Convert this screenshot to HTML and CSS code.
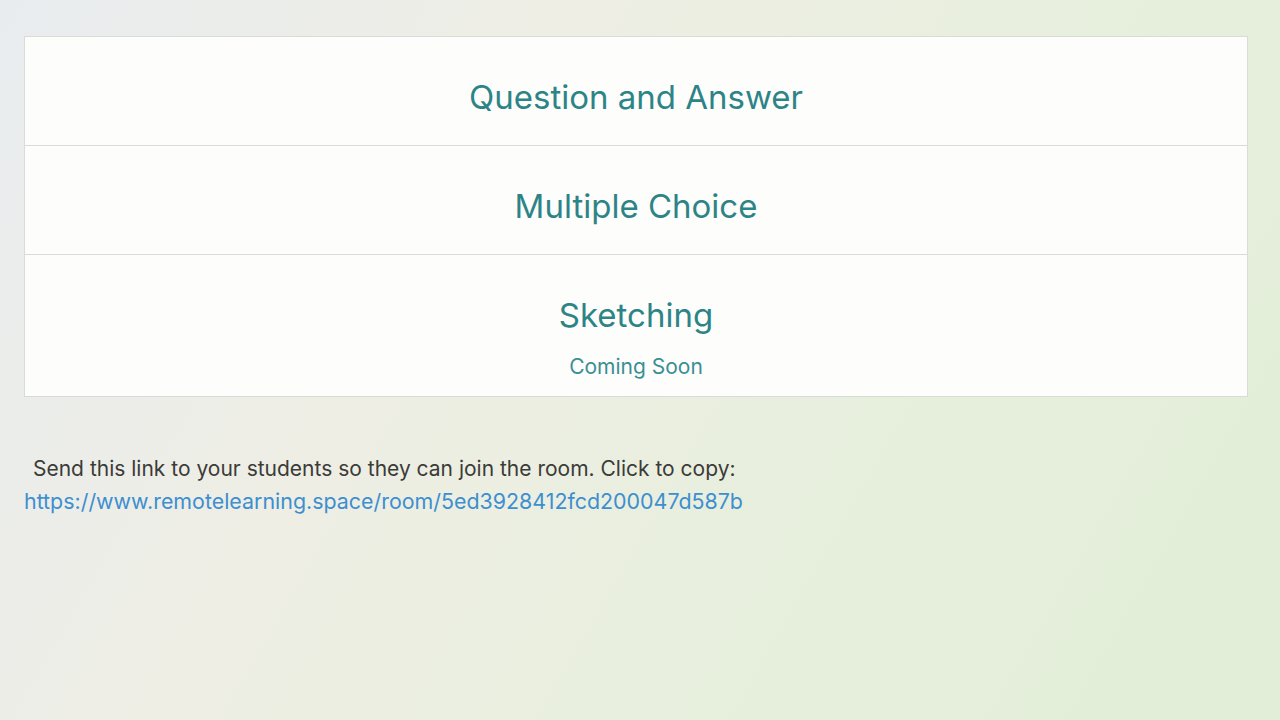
FILE: index.html
```html
<!DOCTYPE html>
<html>
<head>
<meta charset="utf-8">
<link rel="stylesheet" href="styles.css">
</head>
<body>
<div class="page">
  <div class="card">
    <div class="row"><div class="title">Question and Answer</div></div>
    <div class="row"><div class="title">Multiple Choice</div></div>
    <div class="row row-last">
      <div class="title">Sketching</div>
      <div class="sub">Coming Soon</div>
    </div>
  </div>
  <div class="share">
    <div class="msg">Send this link to your students so they can join the room. Click to copy:</div>
    <a class="link" href="#">https://www.remotelearning.space/room/5ed3928412fcd200047d587b</a>
  </div>
</div>
</body>
</html>
```
FILE: styles.css
```css
html, body {
  margin: 0;
  height: 100%;
}
body {
  background: linear-gradient(120deg, #e9ecef 0%, #eeeee4 35%, #e6efdc 70%, #e2eed8 100%);
  font-family: Inter, "Liberation Sans", Arial, sans-serif;
}
.page {
  padding: 36px 32px 0 24px;
}
.card {
  background: #fdfdfc;
  border: 1px solid #d9dbd9;
}
.row {
  display: flex;
  flex-direction: column;
  align-items: center;
  height: 108px;
  justify-content: center;
  border-bottom: 1px solid #d9dbd9;
}
.row-last {
  border-bottom: none;
  height: 141px;
  justify-content: flex-start;
}
.row .title {
  font-size: 33px;
  line-height: 38px;
  color: #2d8487;
}
.row:not(.row-last) .title {
  margin-top: 12px;
}
.row-last .title {
  margin-top: 41px;
}
.sub {
  margin-top: 20px;
  font-size: 21px;
  line-height: 26px;
  color: #3a8f94;
}
.share {
  margin-top: 56px;
  font-size: 21px;
  line-height: 32px;
}
.msg {
  color: #3b3b38;
  padding-left: 9px;
}
.link {
  font-size: 21.4px;
  color: #3d8fd0;
  text-decoration: none;
}
```
